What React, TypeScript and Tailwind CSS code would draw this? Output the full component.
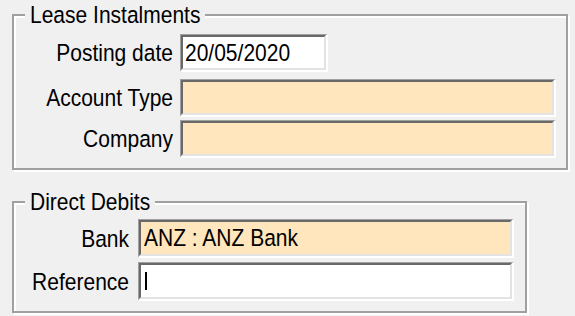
import React from "react";

function T({ children }: { children: React.ReactNode }) {
  return <span className="inline-block scale-y-[1.16] whitespace-nowrap">{children}</span>;
}

function Field({
  bg,
  h,
  children,
}: {
  bg: string;
  h: string;
  children?: React.ReactNode;
}) {
  return (
    <div className={`w-[376px] ${h} flex border-t border-l border-[#a0a0a0] border-b-2 border-r-2 border-b-white border-r-white`}>
      <div
        className={`flex-1 flex items-center border-2 border-t-[#696969] border-l-[#696969] border-b-[#e3e3e3] border-r-[#e3e3e3] ${bg}`}
      >
        {children}
      </div>
    </div>
  );
}

function Group({
  title,
  className,
  children,
}: {
  title: string;
  className: string;
  children: React.ReactNode;
}) {
  return (
    <div
      className={`relative border-2 border-[#a0a0a0] shadow-[inset_2px_2px_0_#fff,2px_2px_0_#fff] ${className}`}
    >
      <span className="absolute left-[11px] top-[-13px] px-[5px] bg-[#f0f0f0] leading-[24px] whitespace-nowrap">
        <T>{title}</T>
      </span>
      {children}
    </div>
  );
}

export default function App() {
  return (
    <div className="w-[575px] h-[316px] overflow-hidden bg-[#f0f0f0] pl-[12px] pt-[14px] font-['Liberation_Sans',Arial,sans-serif] text-[21px] text-black">
      <Group title="Lease Instalments" className="w-[556px] pt-[18px] pb-[10px]">
        <div className="grid grid-cols-[159px_376px] gap-x-[7px]">
          <div className="flex items-center justify-end h-[38px]">
            <T>Posting date</T>
          </div>
          <div className="h-[38px]">
            <div className="w-[148px] h-[38px] flex border-t border-l border-[#a0a0a0] border-b-2 border-r-2 border-b-white border-r-white">
              <div className="flex-1 flex items-center pl-[2px] border-2 border-t-[#696969] border-l-[#696969] border-b-[#e3e3e3] border-r-[#e3e3e3] bg-white">
                <T>20/05/2020</T>
              </div>
            </div>
          </div>
          <div className="flex items-center justify-end h-[38px] mt-[7px]">
            <T>Account Type</T>
          </div>
          <div className="mt-[7px]">
            <Field bg="bg-[#ffe6bc]" h="h-[38px]" />
          </div>
          <div className="flex items-center justify-end h-[38px] mt-[3px]">
            <T>Company</T>
          </div>
          <div className="mt-[3px]">
            <Field bg="bg-[#ffe6bc]" h="h-[38px]" />
          </div>
        </div>
      </Group>

      <Group title="Direct Debits" className="w-[515px] mt-[31px] pt-[16px] pb-[10px]">
        <div className="grid grid-cols-[115px_376px] gap-x-[9px]">
          <div className="flex items-center justify-end h-[39px]">
            <T>Bank</T>
          </div>
          <Field bg="bg-[#ffe6bc] pl-[3px]" h="h-[39px]">
            <T>ANZ : ANZ Bank</T>
          </Field>
          <div className="flex items-center justify-end h-[39px] mt-[4px]">
            <T>Reference</T>
          </div>
          <div className="mt-[4px]">
            <Field bg="bg-white pl-[4px]" h="h-[39px]">
              <span className="block w-[2px] h-[18px] bg-black" />
            </Field>
          </div>
        </div>
      </Group>
    </div>
  );
}
